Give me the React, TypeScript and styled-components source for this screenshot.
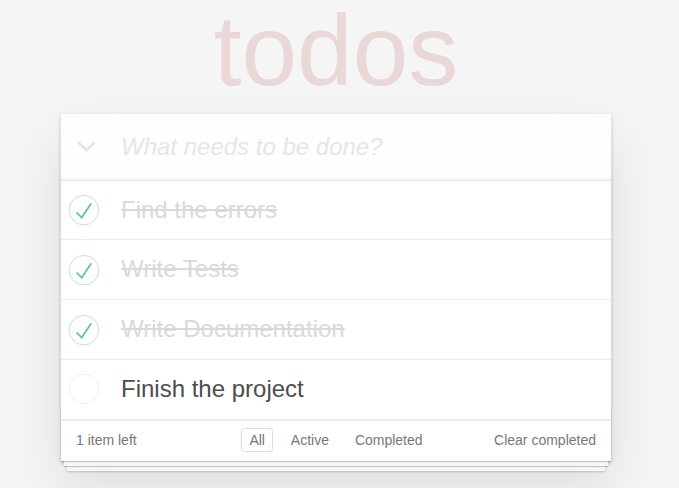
import React from "react";
import styled, { createGlobalStyle } from "styled-components";

const GlobalStyle = createGlobalStyle`
  html, body {
    margin: 0;
    padding: 0;
  }
  body {
    background: #f5f5f5;
    color: #4d4d4d;
    font: 14px "Liberation Sans", Arial, Helvetica, sans-serif;
    line-height: 1.4em;
    min-height: 488px;
    -webkit-font-smoothing: antialiased;
  }
`;

const Page = styled.div`
  width: 550px;
  margin: 0 0 0 61px;
  padding: 0 0 40px;
`;

const Title = styled.h1`
  margin: -7px 0 6px;
  font-size: 100px;
  line-height: 115px;
  font-weight: 100;
  text-align: center;
  color: rgba(175, 47, 47, 0.15);
  text-rendering: optimizeLegibility;
`;

const Card = styled.section`
  background: #fff;
  position: relative;
  box-shadow: 0 2px 4px 0 rgba(0, 0, 0, 0.2), 0 25px 50px 0 rgba(0, 0, 0, 0.1);
`;

const Sheets = styled.div`
  position: absolute;
  right: 0;
  bottom: 0;
  left: 0;
  height: 50px;
  pointer-events: none;
  box-shadow: 0 1px 1px rgba(0, 0, 0, 0.2), 0 8px 0 -3px #f6f6f6,
    0 9px 1px -3px rgba(0, 0, 0, 0.2), 0 16px 0 -6px #f6f6f6,
    0 17px 2px -6px rgba(0, 0, 0, 0.2);
`;

const Header = styled.header`
  display: flex;
  align-items: center;
  background: rgba(0, 0, 0, 0.003);
  box-shadow: inset 0 -2px 1px rgba(0, 0, 0, 0.03);
`;

const ToggleAll = styled.label`
  width: 44px;
  padding-left: 16px;
  display: flex;
  align-items: center;
  flex-shrink: 0;
  align-self: stretch;
`;

const NewTodo = styled.input`
  flex: 1;
  min-width: 0;
  margin: 0;
  border: none;
  outline: none;
  background: transparent;
  padding: 16px 16px 16px 0;
  font-family: inherit;
  font-size: 24px;
  line-height: 1.4em;
  height: 1.4em;
  color: inherit;
  &::placeholder {
    font-style: italic;
    font-weight: 300;
    color: #e6e6e6;
  }
`;

const Main = styled.section`
  border-top: 1px solid #e6e6e6;
`;

const List = styled.ul`
  margin: 0;
  padding: 0;
  list-style: none;
`;

const Item = styled.li`
  display: flex;
  align-items: center;
  font-size: 24px;
  border-bottom: 1px solid #ededed;
`;

const Toggle = styled.svg`
  width: 40px;
  height: 40px;
  flex-shrink: 0;
  display: block;
`;

const ItemLabel = styled.label<{ $done?: boolean }>`
  flex: 1;
  display: block;
  padding: 15px 15px 15px 20px;
  line-height: 1.2;
  word-break: break-all;
  color: ${(p) => (p.$done ? "#d9d9d9" : "#4d4d4d")};
  text-decoration: ${(p) => (p.$done ? "line-through" : "none")};
`;

const Footer = styled.footer`
  position: relative;
  z-index: 1;
  display: grid;
  grid-template-columns: 1fr auto 1fr;
  align-items: center;
  color: #777;
  padding: 9px 15px 11px;
  height: 20px;
  line-height: 20px;
  border-top: 1px solid #e6e6e6;
`;

const Count = styled.span`
  text-align: left;
`;

const Filters = styled.ul`
  display: flex;
  gap: 3.9px;
  margin: 0;
  padding: 0;
  list-style: none;
`;

const FilterItem = styled.li`
  line-height: 20px;
`;

const FilterLink = styled.a<{ $selected?: boolean }>`
  color: inherit;
  margin: 3px;
  padding: 3px 7px;
  text-decoration: none;
  border: 1px solid
    ${(p) => (p.$selected ? "rgba(175, 47, 47, 0.2)" : "transparent")};
  border-radius: 3px;
  cursor: pointer;
`;

const ClearButton = styled.button`
  justify-self: end;
  margin: 0;
  padding: 0;
  border: 0;
  background: none;
  font: inherit;
  line-height: 20px;
  color: inherit;
  cursor: pointer;
`;

const CheckIcon = ({ done }: { done: boolean }) => (
  <Toggle viewBox="-10 -18 100 135">
    <circle
      cx="50"
      cy="50"
      r="50"
      fill="none"
      stroke={done ? "#bddad5" : "#ededed"}
      strokeWidth="3"
    />
    {done && <path fill="#5dc2af" d="M72 25L42 71 27 56l-4 4 20 20 34-52z" />}
  </Toggle>
);

const todos = [
  { text: "Find the errors", done: true },
  { text: "Write Tests", done: true },
  { text: "Write Documentation", done: true },
  { text: "Finish the project", done: false },
];

export default function App() {
  return (
    <>
      <GlobalStyle />
      <Page>
        <Title>todos</Title>
        <Card>
          <Header>
            <ToggleAll>
              <svg width="19" height="11" viewBox="0 0 19 11">
                <polyline
                  points="1.2,1.2 9.5,9.2 17.8,1.2"
                  fill="none"
                  stroke="#e6e6e6"
                  strokeWidth="2.6"
                />
              </svg>
            </ToggleAll>
            <NewTodo placeholder="What needs to be done?" />
          </Header>
          <Main>
            <List>
              {todos.map((t) => (
                <Item key={t.text}>
                  <CheckIcon done={t.done} />
                  <ItemLabel $done={t.done}>{t.text}</ItemLabel>
                </Item>
              ))}
            </List>
          </Main>
          <Footer>
            <Count>1 item left</Count>
            <Filters>
              <FilterItem>
                <FilterLink $selected>All</FilterLink>
              </FilterItem>
              <FilterItem>
                <FilterLink>Active</FilterLink>
              </FilterItem>
              <FilterItem>
                <FilterLink>Completed</FilterLink>
              </FilterItem>
            </Filters>
            <ClearButton>Clear completed</ClearButton>
          </Footer>
          <Sheets />
        </Card>
      </Page>
    </>
  );
}
